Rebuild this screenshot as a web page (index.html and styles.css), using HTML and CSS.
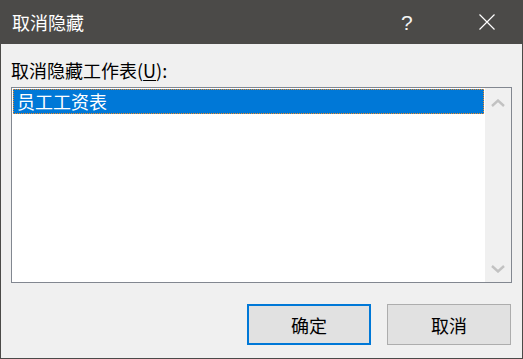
FILE: index.html
```html
<!DOCTYPE html>
<html lang="zh-CN">
<head>
    <meta charset="UTF-8">
    <title>取消隐藏</title>
    <link rel="stylesheet" href="styles.css">
</head>
<body>
    <div class="dialog">
        <div class="titlebar">
            <span class="title">取消隐藏</span>
            <span class="help">?</span>
            <span class="close">
                <svg width="16" height="16" viewBox="0 0 16 16">
                    <path d="M0.5 0.5 L15.5 15.5 M15.5 0.5 L0.5 15.5" stroke="#ffffff" stroke-width="1.2" fill="none"/>
                </svg>
            </span>
        </div>

        <div class="content">
            <div class="label">取消隐藏工作表(<u>U</u>):</div>

            <div class="listbox">
                <div class="items">
                    <div class="item selected">员工工资表</div>
                </div>
                <div class="scrollbar">
                    <svg width="14" height="8" viewBox="0 0 14 8">
                        <path d="M1 7 L7 1.5 L13 7" stroke="#c2c2c2" stroke-width="2.4" fill="none"/>
                    </svg>
                    <svg width="14" height="8" viewBox="0 0 14 8">
                        <path d="M1 1 L7 6.5 L13 1" stroke="#c2c2c2" stroke-width="2.4" fill="none"/>
                    </svg>
                </div>
            </div>

            <div class="buttons">
                <button class="btn default">确定</button>
                <button class="btn">取消</button>
            </div>
        </div>
    </div>
</body>
</html>
```

FILE: styles.css
```css
* {
    margin: 0;
    padding: 0;
    box-sizing: border-box;
}

body {
    font-family: 'Noto Sans CJK SC', 'Noto Sans', sans-serif;
    background: #f0f0f0;
}

.dialog {
    width: 523px;
    height: 359px;
    border: 1px solid #4b4a48;
    border-top: none;
    background: #f0f0f0;
    display: flex;
    flex-direction: column;
}

.titlebar {
    height: 44px;
    background: #4b4a48;
    color: #ffffff;
    display: flex;
    align-items: center;
    padding-left: 11px;
}

.title {
    font-size: 18px;
    flex: 1;
}

.help {
    font-family: 'Liberation Sans', sans-serif;
    font-size: 21px;
    color: #f4f4f4;
    width: 30px;
    margin-right: 48px;
    margin-top: 2px;
}

.close {
    display: flex;
    margin-right: 27px;
}

.content {
    padding: 14px 10px 0 10px;
    display: flex;
    flex-direction: column;
}

.label {
    font-size: 18px;
    color: #000000;
    line-height: 24px;
}

.label u {
    text-underline-offset: 2px;
}

.listbox {
    margin-top: 5px;
    height: 196px;
    border: 1px solid #828790;
    background: #ffffff;
    display: flex;
    padding: 1px 0 0 1px;
}

.items {
    flex: 1;
    padding-right: 1px;
}

.item {
    height: 25px;
    font-size: 18px;
    line-height: 22px;
    padding-left: 3px;
    color: #000000;
}

.item.selected {
    background: #0078d7;
    color: #ffffff;
    border: 1px dotted #f08a24;
}

.scrollbar {
    width: 26px;
    margin-top: -1px;
    background: #f0f0f0;
    display: flex;
    flex-direction: column;
    justify-content: space-between;
    align-items: center;
    padding: 11px 0 9px 0;
}

.buttons {
    display: flex;
    justify-content: flex-end;
    gap: 16px;
    margin-top: 21px;
    padding-right: 1px;
}

.btn {
    width: 124px;
    height: 41px;
    background: #e1e1e1;
    border: 1px solid #adadad;
    font-family: 'Noto Sans CJK SC', sans-serif;
    font-size: 18px;
    color: #000000;
}

.btn.default {
    border: 2px solid #0078d7;
}
```
